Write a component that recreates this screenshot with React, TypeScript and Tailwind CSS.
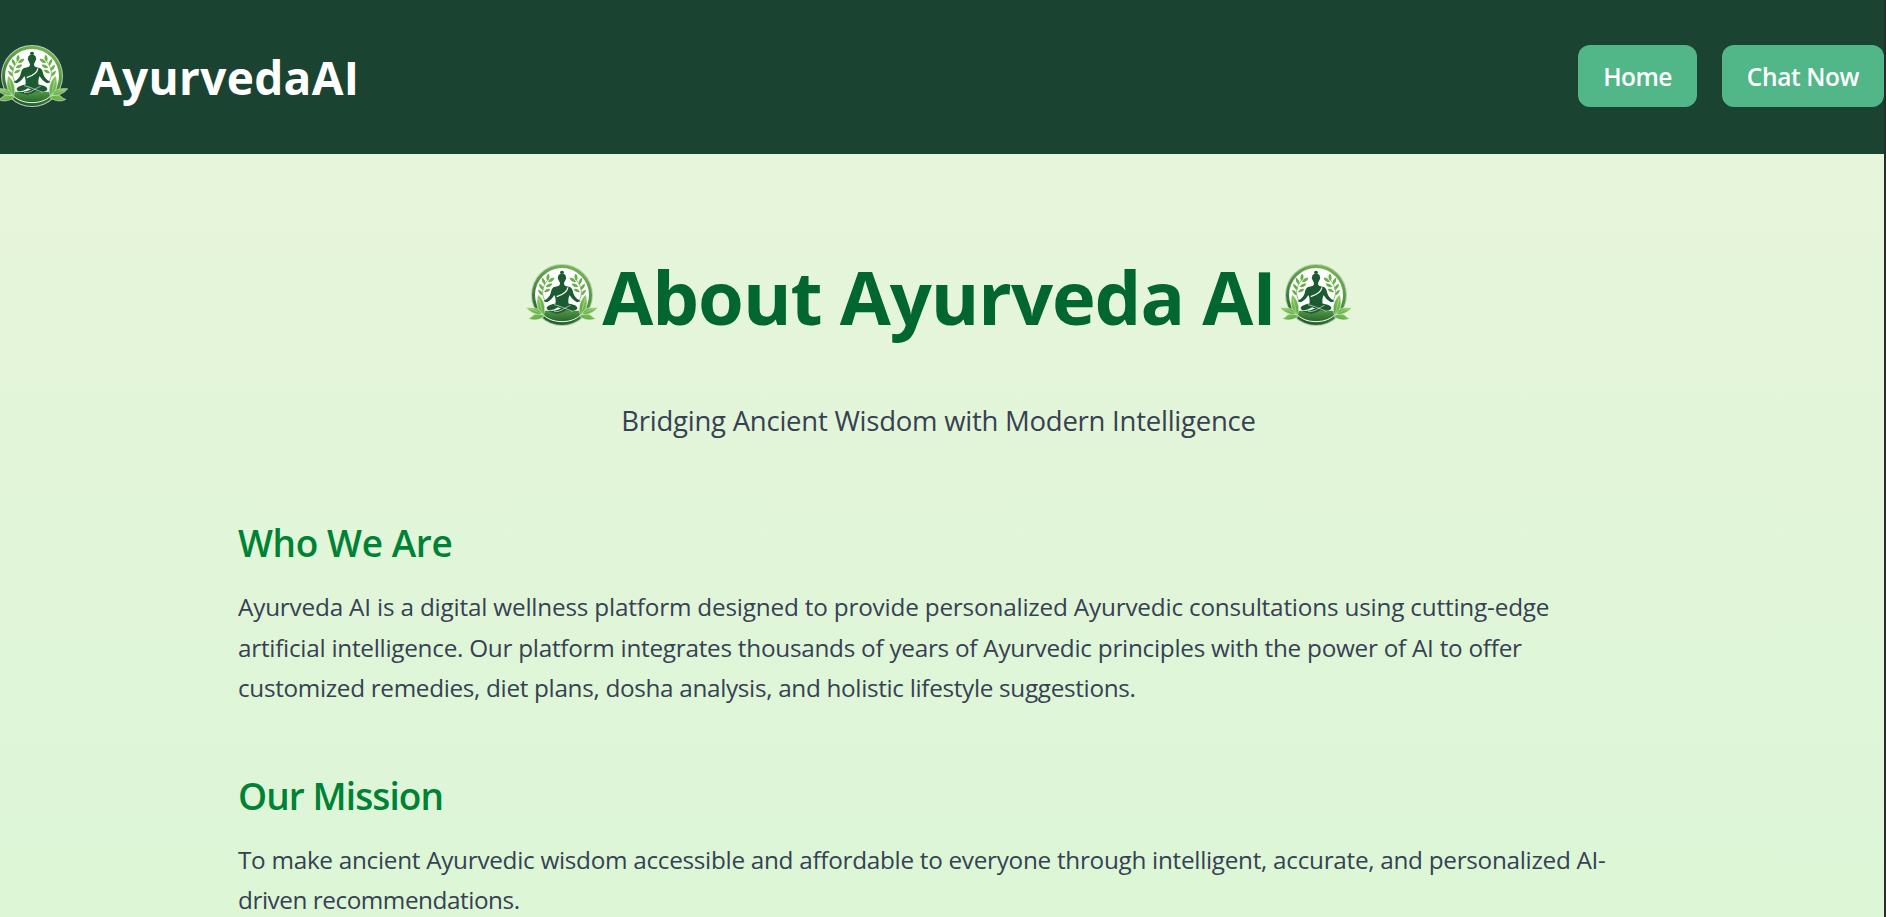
import { useId } from 'react';

function Sprig() {
  return (
    <g>
      <path d="M58 112 C46 92 46 72 66 46" fill="none" stroke="#5c9a4c" strokeWidth="2" />
      <g fill="#6ab04a">
        <path d="M64 50 C58 40 62 32 68 29 C73 38 71 45 64 50Z" />
        <path d="M66 54 C70 44 78 40 85 42 C83 51 75 56 66 54Z" />
        <path d="M57 62 C48 57 46 48 48 41 C57 45 60 53 57 62Z" />
        <path d="M59 68 C64 59 72 57 79 59 C76 67 68 72 59 68Z" />
        <path d="M52 78 C43 75 39 67 39 59 C49 62 54 69 52 78Z" />
        <path d="M54 84 C58 75 65 72 73 75 C69 83 62 87 54 84Z" />
        <path d="M50 94 C42 92 37 85 36 77 C46 79 51 86 50 94Z" />
      </g>
    </g>
  );
}

function SideLeaves({ fill }: { fill: string }) {
  return (
    <g stroke="#e3f0d6" strokeWidth="1.8">
      <path d="M52 154 C32 142 29 114 37 92 C53 106 62 132 52 154Z" fill={fill} />
      <path d="M50 151 C46 132 42 116 39 104" fill="none" strokeWidth="1.2" />
      <path d="M54 158 C36 170 18 170 7 163 C20 160 20 150 32 149 C42 147 50 152 54 158Z" fill={fill} />
      <path d="M48 151 C32 153 12 146 1 131 C20 131 40 129 48 151Z" fill={fill} />
      <path d="M46 149 C34 143 22 137 10 134" fill="none" strokeWidth="1.2" />
    </g>
  );
}

function Logo({ className }: { className: string }) {
  const id = useId().replace(/[^a-zA-Z0-9]/g, '');
  const ring = `ring${id}`;
  const ground = `ground${id}`;
  const leaf = `leaf${id}`;
  return (
    <svg viewBox="0 0 216 192" className={className} aria-hidden="true">
      <defs>
        <linearGradient id={ring} x1="0.7" y1="0" x2="0.3" y2="1">
          <stop offset="0" stopColor="#74b650" />
          <stop offset="0.5" stopColor="#4c9140" />
          <stop offset="1" stopColor="#1f5a2e" />
        </linearGradient>
        <linearGradient id={ground} x1="0" y1="0" x2="0" y2="1">
          <stop offset="0" stopColor="#4f9740" />
          <stop offset="1" stopColor="#23602f" />
        </linearGradient>
        <linearGradient id={leaf} x1="0" y1="0" x2="1" y2="1">
          <stop offset="0" stopColor="#8acb5e" />
          <stop offset="1" stopColor="#55a540" />
        </linearGradient>
      </defs>
      <circle cx="108" cy="93" r="93" fill="#bccab8" />
      <circle cx="108" cy="93" r="90" fill={`url(#${ring})`} />
      <circle cx="108" cy="93" r="81" fill="#ffffff" />
      <path d="M41 140 H175 A80 80 0 0 1 41 140Z" fill={`url(#${ground})`} />
      <Sprig />
      <g transform="translate(216 0) scale(-1 1)">
        <Sprig />
      </g>
      <g fill="#1c5a32">
        <ellipse cx="108" cy="25" rx="6" ry="5" />
        <path d="M96 40 C96 25 120 25 120 40 C122 43 119 46 118 49 C116 54 114 56 114 58 C114 65 118 67 128 68 C138 70 140 78 142 88 C145 98 151 104 160 109 L164 112 L153 115 C143 110 135 101 131 93 C127 101 126 110 128 121 H88 C90 110 89 101 85 93 C81 101 73 110 63 115 L52 112 L56 109 C65 104 71 98 74 88 C76 78 78 70 88 68 C98 67 102 65 102 58 C102 56 100 54 98 49 C97 46 94 43 96 40Z" />
        <path d="M85 119 H131 C142 121 154 125 154 132 C154 139 138 143 122 140 L96 130 C80 141 64 142 62 133 C62 126 74 121 85 119Z" />
        <path d="M64 141 C82 144 102 135 116 128 L140 123 C134 132 112 147 92 149 Z" />
      </g>
      <path d="M126 70 C123 84 111 92 92 98" fill="none" stroke="#ffffff" strokeWidth="3.5" />
      <path d="M84 122 C100 125 118 134 140 142 M134 124 C116 130 108 144 84 143" fill="none" stroke="#e6f2e0" strokeWidth="2" />
      <path d="M47 146 C70 182 146 182 169 146" fill="none" stroke="#f3faee" strokeWidth="3" />
      <SideLeaves fill={`url(#${leaf})`} />
      <g transform="translate(216 0) scale(-1 1)">
        <SideLeaves fill={`url(#${leaf})`} />
      </g>
    </svg>
  );
}

interface Line {
  text: string;
  tracking: string;
}

interface SectionData {
  title: string;
  tracking: string;
  lines: Line[];
}

const sections: SectionData[] = [
  {
    title: 'Who We Are',
    tracking: 'tracking-[-0.4px]',
    lines: [
      {
        text: 'Ayurveda AI is a digital wellness platform designed to provide personalized Ayurvedic consultations using cutting-edge ',
        tracking: 'tracking-[-0.19px]',
      },
      {
        text: 'artificial intelligence. Our platform integrates thousands of years of Ayurvedic principles with the power of AI to offer ',
        tracking: 'tracking-[-0.26px]',
      },
      {
        text: 'customized remedies, diet plans, dosha analysis, and holistic lifestyle suggestions.',
        tracking: 'tracking-[-0.32px]',
      },
    ],
  },
  {
    title: 'Our Mission',
    tracking: 'tracking-[-0.9px]',
    lines: [
      {
        text: 'To make ancient Ayurvedic wisdom accessible and affordable to everyone through intelligent, accurate, and personalized AI-',
        tracking: 'tracking-[-0.285px]',
      },
      { text: 'driven recommendations.', tracking: 'tracking-[-0.45px]' },
    ],
  },
];

function Section({ title, tracking, lines }: SectionData) {
  return (
    <section>
      <h2 className={`mb-[22px] text-[37px] leading-[45px] font-semibold text-[#008236] ${tracking}`}>{title}</h2>
      <p className="text-[24.3px] leading-[40.5px] whitespace-nowrap text-[#364153]">
        {lines.map((line) => (
          <span key={line.text} className={`block ${line.tracking}`}>
            {line.text}
          </span>
        ))}
      </p>
    </section>
  );
}

export default function App() {
  return (
    <div className="flex h-[917px] w-full overflow-hidden bg-[#2b2b2b] pr-[2px] font-['Open_Sans','Noto_Sans',sans-serif]">
      <div className="flex min-w-0 grow flex-col">
        <header className="flex h-[154px] shrink-0 items-center justify-between bg-[#1b4332] pb-[2px]">
          <div className="flex items-center pt-[2px]">
            <Logo className="-ml-[4px] h-[64px] w-[72px] shrink-0" />
            <span className="ml-[22px] text-[46px] leading-[62px] font-bold tracking-[0.3px] text-white">AyurvedaAI</span>
          </div>
          <nav className="flex gap-[25px] text-[24.5px] font-semibold text-white">
            <a href="#home" className="flex h-[62px] w-[119px] items-center justify-center rounded-[12px] bg-[#52b788] pt-[2px] tracking-[-0.6px]">
              Home
            </a>
            <a href="#chat" className="flex h-[62px] w-[162px] items-center justify-center rounded-[12px] bg-[#52b788] pt-[2px] tracking-[-0.4px]">
              Chat Now
            </a>
          </nav>
        </header>
        <main className="min-h-0 grow overflow-hidden bg-linear-to-b from-[#e7f5db] to-[#dcf6d6]">
          <div className="mt-[93px] flex items-center justify-center pr-[6px]">
            <Logo className="h-[64px] w-[72px] shrink-0 -translate-y-[1px]" />
            <h1 className="ml-[4px] text-[74px] leading-[100px] font-bold tracking-[-1.05px] text-[#016630]">About Ayurveda AI</h1>
            <Logo className="ml-[4px] h-[64px] w-[72px] shrink-0 -translate-y-[1px]" />
          </div>
          <p className="mt-[54px] pr-[7px] text-center text-[27.5px] leading-[40px] tracking-[-0.24px] text-[#364153]">
            Bridging Ancient Wisdom with Modern Intelligence
          </p>
          <div className="mt-[79px] flex flex-col gap-[64px] pl-[238px]">
            {sections.map((section) => (
              <Section key={section.title} {...section} />
            ))}
          </div>
        </main>
      </div>
    </div>
  );
}
